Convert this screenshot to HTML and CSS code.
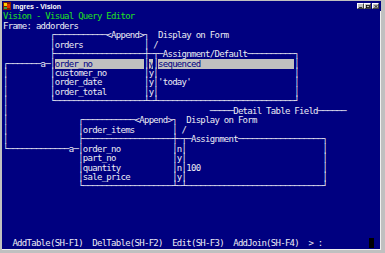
FILE: index.html
```html
<!DOCTYPE html>
<html lang="en">
<head>
    <meta charset="UTF-8">
    <title>Ingres - Vision</title>
    <link rel="stylesheet" href="styles.css">
</head>
<body>
<div class="window">
    <div class="titlebar">
        <svg class="app-icon" width="8" height="8" viewBox="0 0 8 8">
            <rect x="0" y="0" width="8" height="8" fill="#802000"/>
            <rect x="1" y="1" width="3" height="3" fill="#ffd000"/>
            <rect x="4" y="2" width="3" height="4" fill="#e03000"/>
            <rect x="1" y="5" width="3" height="2" fill="#40a040"/>
        </svg>
        <span class="caption">Ingres - Vision</span>
        <div class="controls">
            <span class="btn"><svg width="5" height="4" viewBox="0 0 5 4"><rect x="0" y="3" width="4" height="1" fill="#000"/></svg></span>
            <span class="btn"><svg width="5" height="4" viewBox="0 0 5 4"><rect x="0.5" y="0.5" width="4" height="3" fill="none" stroke="#000"/></svg></span>
            <span class="btn close"><svg width="5" height="4" viewBox="0 0 5 4"><path d="M0.5 0 L4.5 4 M4.5 0 L0.5 4" stroke="#000"/></svg></span>
        </div>
    </div>
    <div class="screen">
<pre class="term"><span class="title">Vision - Visual Query Editor</span>
Frame: addorders
          ┌───────────&lt;Append&gt;┐  Display on Form
          │orders             │ /
          ├───────────────────┼─┬─Assignment/Default──────────┐
┌───────a─│<span class="hl">order_no           </span>│<span class="hl">y</span>│<span class="hl">sequenced                    </span>│
│         │customer_no        │y│                             │
│         │order_date         │y│'today'                      │
│         │order_total        │y│                             │
│         └───────────────────┴─┴─────────────────────────────┘
│                                           ─────Detail Table Field──────
│               ┌───────────&lt;Append&gt;┐  Display on Form
│               │order_items        │ /
│               ├───────────────────┼─┬─Assignment──────────────────┐
└─────────────a─│order_no           │n│                             │
                │part_no            │y│                             │
                │quantity           │n│100                          │
                │sale_price         │y│                             │
                └───────────────────┴─┴─────────────────────────────┘





  AddTable(SH-F1)  DelTable(SH-F2)  Edit(SH-F3)  AddJoin(SH-F4)  &gt; :          <span class="cursor"> </span></pre>
    </div>
</div>
</body>
</html>
```

FILE: styles.css
```css
body {
    margin: 0;
}
.window {
    width: 385px;
    height: 253px;
    box-sizing: border-box;
    background-color: #c0c0c0;
    padding: 1px 4px 3px 2px;
    display: flex;
    flex-direction: column;
}
.titlebar {
    height: 10px;
    display: flex;
    align-items: center;
    gap: 2px;
    background-color: #000080;
    color: #fff;
    font: bold 7px "Liberation Sans", Arial, sans-serif;
    padding-left: 1px;
}
.app-icon {
    flex: none;
}
.controls {
    margin-left: auto;
    margin-right: 2px;
    display: flex;
}
.btn {
    width: 7px;
    height: 6px;
    box-sizing: border-box;
    background-color: #c0c0c0;
    border-top: 1px solid #fff;
    border-left: 1px solid #fff;
    border-right: 1px solid #404040;
    border-bottom: 1px solid #404040;
    display: flex;
    align-items: center;
    justify-content: center;
    overflow: hidden;
}
.btn svg {
    width: 4px;
    height: 3px;
}
.close {
    margin-left: 1px;
}
.screen {
    flex: 1;
    background-color: #000080;
    border-right: 1px solid #f0f0f0;
    border-bottom: 1px solid #f0f0f0;
    padding: 1.3px 0 0 1px;
    overflow: hidden;
}
.term {
    margin: 0;
    font-family: "DejaVu Sans Mono", "Liberation Mono", monospace;
    font-size: 9px;
    letter-spacing: -0.72px;
    line-height: 9.46px;
    color: #ececf4;
}
.title {
    color: #20e020;
}
.hl {
    background-color: #c0c0c0;
    color: #000080;
}
.cursor {
    background-color: #000;
}
```
